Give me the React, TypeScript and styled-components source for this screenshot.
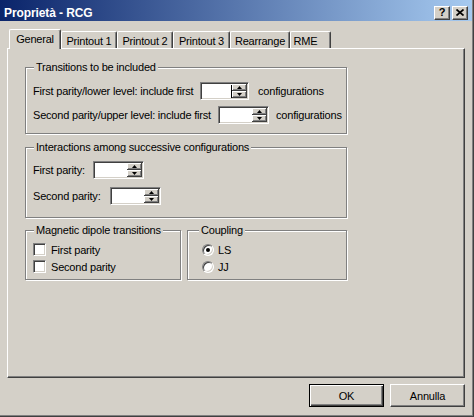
import styled, { createGlobalStyle, css } from "styled-components";

const face = "#D4D0C8";
const shadow = "#808080";
const dark = "#404040";

const GlobalStyle = createGlobalStyle`
  * { box-sizing: border-box; }
  html, body { margin: 0; padding: 0; background: ${face}; }
  body {
    font-family: "Liberation Sans", Arial, sans-serif;
    font-size: 11px;
    letter-spacing: -0.2px;
    color: #000;
  }
`;

const Window = styled.div`
  width: 474px;
  height: 417px;
  display: flex;
  flex-direction: column;
  background: ${face};
  padding: 0 1px 1px 0;
  border-right: 1px solid ${dark};
  border-bottom: 1px solid ${dark};
  box-shadow: inset -1px -1px 0 ${shadow};
`;

const TitleBar = styled.div`
  flex: none;
  height: 21px;
  display: flex;
  align-items: center;
  gap: 2px;
  padding: 4px 4px 0 4px;
  background: linear-gradient(to right, #0a246a, #a6caf0);
`;

const Title = styled.span`
  flex: 1;
  color: #fff;
  font-weight: bold;
  font-size: 12px;
  letter-spacing: -0.1px;
  white-space: nowrap;
`;

const CaptionButton = styled.div`
  width: 16px;
  height: 14px;
  display: flex;
  align-items: center;
  justify-content: center;
  background: ${face};
  border: 1px solid;
  border-color: #fff ${dark} ${dark} #fff;
  box-shadow: inset -1px -1px 0 ${shadow};
  font-weight: bold;
  font-size: 11px;
  letter-spacing: 0;
  line-height: 1;
`;

const Body = styled.div`
  flex: 1;
  display: flex;
  flex-direction: column;
  padding: 8px 7px 0 7px;
`;

const TabStrip = styled.div`
  height: 19px;
  display: flex;
  align-items: flex-end;
  padding-left: 2px;
`;

const Tab = styled.div<{ $active?: boolean; $w: number; $pr?: number }>`
  width: ${(p) => p.$w}px;
  height: ${(p) => (p.$active ? 20 : 17)}px;
  margin-bottom: ${(p) => (p.$active ? -1 : 0)}px;
  position: relative;
  z-index: ${(p) => (p.$active ? 1 : 0)};
  display: flex;
  align-items: center;
  justify-content: center;
  padding: ${(p) => (p.$active ? "0 0 2px 0" : "1px 0 0 0")};
  padding-right: ${(p) => p.$pr ?? 0}px;
  background: ${face};
  border-top: 1px solid #fff;
  border-left: 1px solid #fff;
  border-right: 1px solid ${dark};
  border-radius: 2px 2px 0 0;
  box-shadow: inset -1px 0 0 ${shadow};
  white-space: nowrap;
`;

const Panel = styled.div`
  flex: none;
  height: 330px;
  padding: 18px 17px;
  border-top: 1px solid #fff;
  border-left: 1px solid #fff;
  border-right: 1px solid ${dark};
  border-bottom: 1px solid ${dark};
  box-shadow: inset -1px -1px 0 ${shadow};
`;

const GroupColumn = styled.div`
  width: 322px;
  display: flex;
  flex-direction: column;
`;

const GroupBox = styled.div<{ $mt?: number; $pb: number }>`
  display: flex;
  flex-direction: column;
  margin-top: ${(p) => p.$mt ?? 0}px;
  padding-bottom: ${(p) => p.$pb}px;
  border: 1px solid ${shadow};
  box-shadow: inset 1px 1px 0 #fff, 1px 1px 0 #fff;
`;

const Legend = styled.div<{ $indent?: number }>`
  align-self: flex-start;
  height: 13px;
  line-height: 13px;
  margin: -7px 0 0 ${(p) => p.$indent ?? 8}px;
  padding: 0 2px;
  background: ${face};
  white-space: nowrap;
`;

const Rows = styled.div<{ $mt: number; $gap: number; $pl: number }>`
  display: flex;
  flex-direction: column;
  margin-top: ${(p) => p.$mt}px;
  gap: ${(p) => p.$gap}px;
  padding-left: ${(p) => p.$pl}px;
`;

const FieldRow = styled.div`
  display: flex;
  align-items: center;
  height: 18px;
`;

const Label = styled.span<{ $w?: number }>`
  width: ${(p) => (p.$w ? `${p.$w}px` : "auto")};
  flex: none;
  white-space: nowrap;
`;

const Suffix = styled.span<{ $ml: number }>`
  margin-left: ${(p) => p.$ml}px;
  white-space: nowrap;
`;

const SpinEdit = styled.div<{ $w: number }>`
  width: ${(p) => p.$w}px;
  height: 18px;
  flex: none;
  display: flex;
  padding: 1px;
  background: #fff;
  border: 1px solid;
  border-color: ${shadow} #fff #fff ${shadow};
  box-shadow: inset 1px 1px 0 ${dark}, inset -1px -1px 0 ${face};
`;

const EditText = styled.div`
  flex: 1;
  display: flex;
  align-items: center;
  justify-content: flex-end;
`;

const Caret = styled.span`
  width: 1px;
  height: 13px;
  background: #000;
`;

const SpinButtons = styled.div`
  width: 15px;
  display: flex;
  flex-direction: column;
`;

const SpinButton = styled.div`
  flex: 1;
  display: flex;
  align-items: center;
  justify-content: center;
  background: ${face};
  border-right: 1px solid ${dark};
  border-bottom: 1px solid ${dark};
  box-shadow: inset 1px 1px 0 #fff, inset -1px -1px 0 ${shadow};
`;

const BottomGroups = styled.div`
  display: grid;
  grid-template-columns: 156px 160px;
  gap: 6px;
  margin-top: 12px;
`;

const OptionRow = styled.div<{ $gap: number }>`
  display: flex;
  align-items: center;
  height: 17px;
  gap: ${(p) => p.$gap}px;
`;

const CheckBox = styled.span`
  width: 13px;
  height: 13px;
  flex: none;
  background: #fff;
  border: 1px solid;
  border-color: ${shadow} #fff #fff ${shadow};
  box-shadow: inset 1px 1px 0 ${dark}, inset -1px -1px 0 ${face};
`;

const Radio = styled.span<{ $checked?: boolean }>`
  width: 12px;
  height: 12px;
  flex: none;
  display: flex;
  align-items: center;
  justify-content: center;
  border-radius: 50%;
  background: #fff;
  border: 1px solid;
  border-color: ${shadow} #fff #fff ${shadow};
  box-shadow: inset 1px 1px 0 ${dark}, inset -1px -1px 0 ${face};
  &::after {
    content: "";
    display: ${(p) => (p.$checked ? "block" : "none")};
    width: 4px;
    height: 4px;
    border-radius: 50%;
    background: #000;
  }
`;

const ButtonRow = styled.div`
  display: flex;
  justify-content: flex-end;
  gap: 6px;
  margin-top: 6px;
`;

const PushButton = styled.div<{ $default?: boolean }>`
  width: 75px;
  height: 23px;
  display: flex;
  align-items: center;
  justify-content: center;
  background: ${face};
  border: 1px solid;
  border-color: #fff ${dark} ${dark} #fff;
  box-shadow: inset -1px -1px 0 ${shadow};
  ${(p) =>
    p.$default &&
    css`
      border-color: #000;
      box-shadow: inset 1px 1px 0 #fff, inset -1px -1px 0 ${dark},
        inset -2px -2px 0 ${shadow};
    `}
`;

function Arrow({ up }: { up?: boolean }) {
  return (
    <svg width="5" height="3" viewBox="0 0 5 3">
      <path d={up ? "M2.5 0 L5 3 L0 3 Z" : "M0 0 L5 0 L2.5 3 Z"} fill="#000" />
    </svg>
  );
}

function Spin({ w, focused }: { w: number; focused?: boolean }) {
  return (
    <SpinEdit $w={w}>
      <EditText>{focused && <Caret />}</EditText>
      <SpinButtons>
        <SpinButton>
          <Arrow up />
        </SpinButton>
        <SpinButton>
          <Arrow />
        </SpinButton>
      </SpinButtons>
    </SpinEdit>
  );
}

const tabs = [
  { label: "General", w: 52 },
  { label: "Printout 1", w: 56 },
  { label: "Printout 2", w: 56 },
  { label: "Printout 3", w: 57 },
  { label: "Rearrange", w: 60 },
  { label: "RME", w: 41, pr: 10 },
];

export default function App() {
  return (
    <>
      <GlobalStyle />
      <Window>
        <TitleBar>
          <Title>Proprietà - RCG</Title>
          <CaptionButton>?</CaptionButton>
          <CaptionButton>
            <svg width="8" height="7" viewBox="0 0 8 7">
              <path d="M0.5 0.5 L7.5 6.5 M7.5 0.5 L0.5 6.5" stroke="#000" strokeWidth="1.7" />
            </svg>
          </CaptionButton>
        </TitleBar>
        <Body>
          <TabStrip>
            {tabs.map((t, i) => (
              <Tab key={t.label} $w={t.w} $pr={t.pr} $active={i === 0}>
                {t.label}
              </Tab>
            ))}
          </TabStrip>
          <Panel>
            <GroupColumn>
              <GroupBox $pb={9}>
                <Legend>Transitions to be included</Legend>
                <Rows $mt={8} $gap={6} $pl={7}>
                  <FieldRow>
                    <Label $w={167}>First parity/lower level: include first</Label>
                    <Spin w={49} focused />
                    <Suffix $ml={9}>configurations</Suffix>
                  </FieldRow>
                  <FieldRow>
                    <Label $w={185}>Second parity/upper level: include first</Label>
                    <Spin w={51} />
                    <Suffix $ml={7}>configurations</Suffix>
                  </FieldRow>
                </Rows>
              </GroupBox>

              <GroupBox $mt={13} $pb={12}>
                <Legend>Interactions among successive configurations</Legend>
                <Rows $mt={7} $gap={8} $pl={7}>
                  <FieldRow>
                    <Label $w={60}>First parity:</Label>
                    <Spin w={51} />
                  </FieldRow>
                  <FieldRow>
                    <Label $w={77}>Second parity:</Label>
                    <Spin w={51} />
                  </FieldRow>
                </Rows>
              </GroupBox>

              <BottomGroups>
                <GroupBox $pb={4}>
                  <Legend>Magnetic dipole transitions</Legend>
                  <Rows $mt={4} $gap={0} $pl={7}>
                    <OptionRow $gap={5}>
                      <CheckBox />
                      First parity
                    </OptionRow>
                    <OptionRow $gap={5}>
                      <CheckBox />
                      Second parity
                    </OptionRow>
                  </Rows>
                </GroupBox>
                <GroupBox $pb={4}>
                  <Legend $indent={11}>Coupling</Legend>
                  <Rows $mt={4} $gap={0} $pl={14}>
                    <OptionRow $gap={4}>
                      <Radio $checked />
                      LS
                    </OptionRow>
                    <OptionRow $gap={4}>
                      <Radio />
                      JJ
                    </OptionRow>
                  </Rows>
                </GroupBox>
              </BottomGroups>
            </GroupColumn>
          </Panel>
          <ButtonRow>
            <PushButton $default>OK</PushButton>
            <PushButton>Annulla</PushButton>
          </ButtonRow>
        </Body>
      </Window>
    </>
  );
}
